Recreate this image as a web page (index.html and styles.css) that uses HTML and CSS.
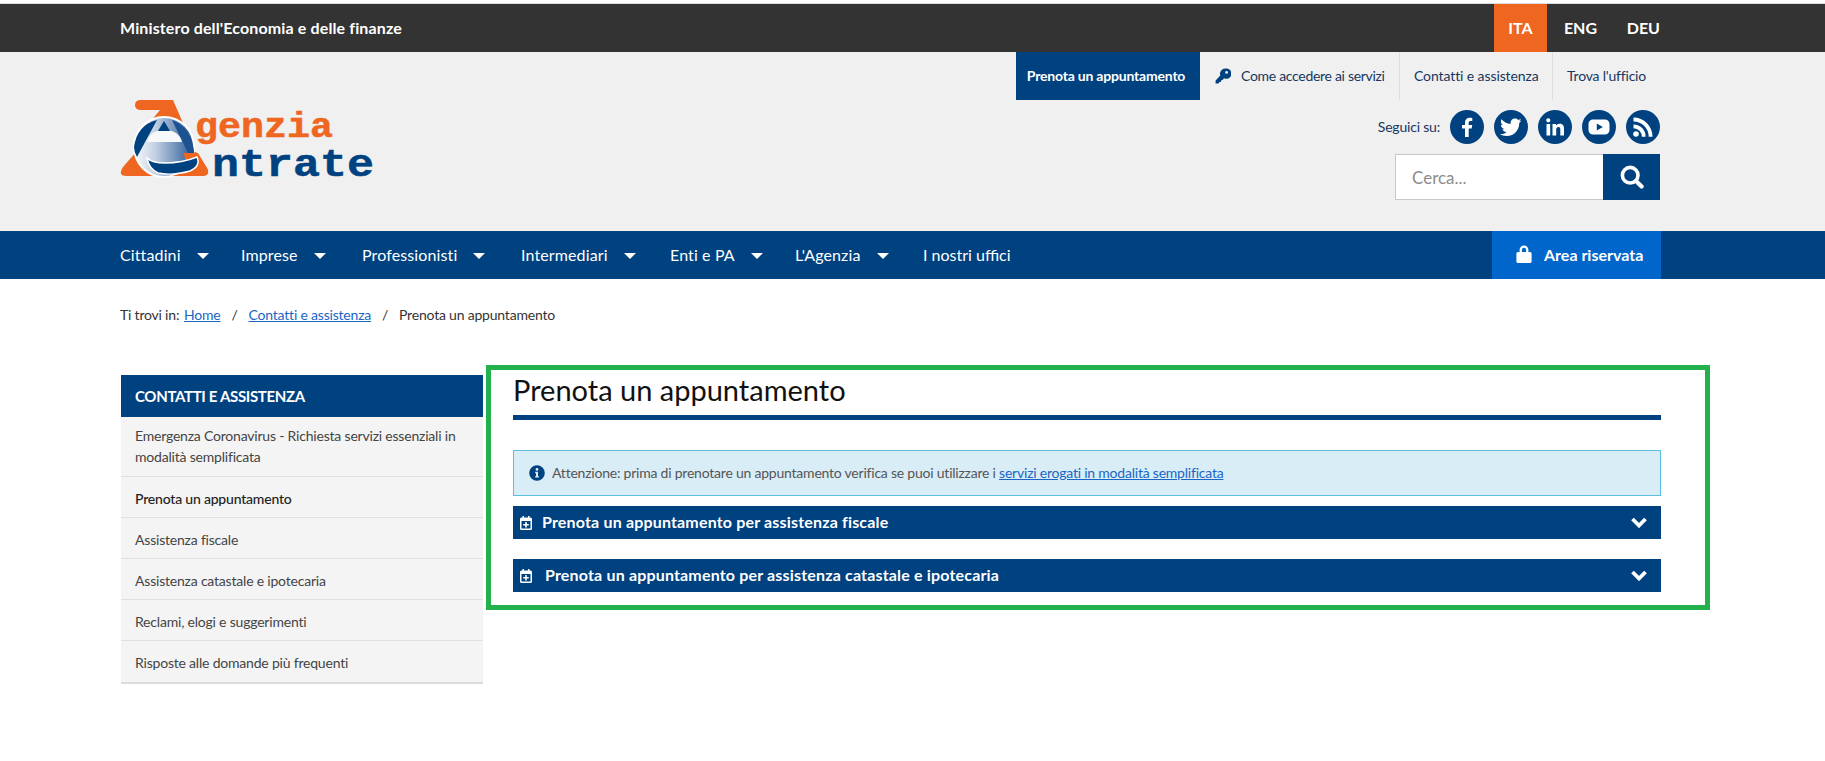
FILE: index.html
```html
<!DOCTYPE html>
<html lang="it">
<head>
<meta charset="utf-8">
<title>Prenota un appuntamento - Agenzia delle Entrate</title>
<link rel="stylesheet" href="styles.css">
</head>
<body>
<div class="topline"></div>
<div class="topbar">
  <div class="wrap topbar-in">
    <span class="ministry">Ministero dell'Economia e delle finanze</span>
    <div class="langs">
      <a class="lang lang-ita">ITA</a>
      <a class="lang lang-eng">ENG</a>
      <a class="lang lang-deu">DEU</a>
    </div>
  </div>
</div>
<header class="header">
  <div class="wrap header-in">
    <svg class="logo" viewBox="120 98 256 92" width="256" height="92" role="img" aria-label="Agenzia Entrate">
      <defs>
        <linearGradient id="eg" x1="0" x2="1" y1="0" y2="0">
          <stop offset="0" stop-color="#f6f8fc"/>
          <stop offset="0.35" stop-color="#c3d0e3"/>
          <stop offset="1" stop-color="#2c5d98"/>
        </linearGradient>
      </defs>
      <path fill="#ee6620" d="M141 100H173L193 146 150 122 160 110H141Q135 110 135 105T141 100Z"/>
      <path fill="#ee6620" d="M136 152 123 167Q117 176 127 176H201Q211 176 207 168L196 152Z"/>
      <circle cx="164" cy="147" r="31" fill="#fff"/>
      <circle cx="164" cy="147" r="29" fill="url(#eg)"/>
      <path fill="#00417f" d="M157 120Q137 125 134 147 134 152 137 157Z"/>
      <path fill="#1d5290" d="M172 120Q190 126 194 150L194 153H188Z"/>
      <path fill="#f7f8fa" d="M147 142Q150 130 164 130 179 130 182 142Z"/>
      <path fill="#00417f" d="M164 121 170 131H158Z"/>
      <path fill="#ee6620" d="M183 153H198L207 168Q211 176 201 176H172Q192 172 183 153Z"/>
      <path fill="#00417f" stroke="#fff" stroke-width="1.500" d="M147 158Q152 163 165 163 182 163 197 157 201 166 190 171 172 176 158 173 149 169 147 158Z"/>
      <text class="logo-t logo-g" x="195" y="137" textLength="138" lengthAdjust="spacingAndGlyphs">genzia</text>
      <text class="logo-t logo-n" x="212" y="176" textLength="162" lengthAdjust="spacingAndGlyphs">ntrate</text>
    </svg>
    <div class="header-right">
      <nav class="util">
        <a class="util-item util-on">Prenota un appuntamento</a>
        <a class="util-item util-key">
          <svg class="ico-key" viewBox="0 0 16 16" width="16" height="16"><path fill="#00417f" d="M10.2 0.5A5.2 5.2 0 0 0 5.300 7.400L0.600 12.600 0.600 15.400 3.600 15.400 4.400 14 5.900 14 6.200 12.300 7.600 12 9 10.300A5.200 5.200 0 1 0 10.200 0.500ZM11.600 3A1.400 1.400 0 1 1 11.600 5.800 1.400 1.400 0 0 1 11.600 3Z"/></svg>
          <span>Come accedere ai servizi</span>
        </a>
        <a class="util-item util-con">Contatti e assistenza</a>
        <a class="util-item util-tro">Trova l'ufficio</a>
      </nav>
      <div class="social">
        <span class="social-label">Seguici su:</span>
        <a class="soc"><svg viewBox="0 0 34 34"><path fill="#fff" d="M18.7 27V18.6H21.7L22.2 15H18.7V12.8C18.7 11.7 19.1 11 20.5 11H22.3V7.9C21.9 7.8 20.9 7.7 19.8 7.7 17 7.7 15 9.3 15 12.4V15H12V18.6H15V27Z"/></svg></a>
        <a class="soc"><svg viewBox="0 0 34 34"><path fill="#fff" d="M27.5 10.6C26.7 10.9 25.9 11.2 25 11.3 25.9 10.7 26.6 9.9 26.9 8.8 26.1 9.3 25.1 9.7 24.2 9.9 23.4 9 22.2 8.5 20.9 8.5 18.4 8.5 16.5 10.5 16.5 12.9 16.5 13.3 16.5 13.6 16.6 13.9 12.9 13.7 9.7 12 7.5 9.3 7.1 10 6.9 10.7 6.9 11.5 6.9 13 7.7 14.4 8.9 15.2 8.2 15.2 7.5 15 6.9 14.7V14.7C6.9 16.9 8.4 18.6 10.4 19 10 19.1 9.7 19.2 9.2 19.2 8.9 19.2 8.7 19.2 8.4 19.1 8.9 20.9 10.6 22.2 12.5 22.2 11 23.4 9 24.1 6.9 24.1 6.5 24.1 6.2 24.1 5.8 24 7.8 25.3 10.1 26 12.6 26 20.8 26 25.2 19.3 25.2 13.4V12.9C26.1 12.2 26.9 11.5 27.5 10.6Z"/></svg></a>
        <a class="soc"><svg viewBox="0 0 34 34"><path fill="#fff" d="M8.5 14H12.2V25.5H8.5ZM10.3 8.2A2.1 2.1 0 1 1 10.3 12.4 2.1 2.1 0 0 1 10.3 8.2ZM14.5 14H18V15.6C18.6 14.6 19.9 13.7 21.7 13.7 25.4 13.7 26 16.1 26 19.2V25.5H22.3V20C22.3 18.6 22.3 16.9 20.4 16.9 18.5 16.9 18.2 18.4 18.2 19.9V25.5H14.5Z"/></svg></a>
        <a class="soc"><svg viewBox="0 0 34 34"><path fill="#fff" fill-rule="evenodd" d="M11 9.5H23A4.5 4.5 0 0 1 27.5 14V20A4.5 4.5 0 0 1 23 24.5H11A4.5 4.5 0 0 1 6.5 20V14A4.5 4.5 0 0 1 11 9.5ZM14.8 13.5V20.5L20.8 17Z"/></svg></a>
        <a class="soc"><svg viewBox="0 0 34 34"><path fill="#fff" d="M10 21.2A2.8 2.8 0 1 1 10 26.8 2.8 2.8 0 0 1 10 21.2ZM7.5 14.4A12 12 0 0 1 19.6 26.8H15.8A8.3 8.3 0 0 0 7.5 18.2ZM7.5 7.6A19 19 0 0 1 26.5 26.8H22.7A15.3 15.3 0 0 0 7.5 11.4Z"/></svg></a>
      </div>
      <form class="search">
        <input class="search-input" type="text" placeholder="Cerca...">
        <button class="search-btn" type="button" aria-label="Cerca">
          <svg viewBox="0 0 24 24" width="24" height="24"><path fill="none" stroke="#fff" stroke-width="3.6" d="M10.2 2.4A7.8 7.8 0 1 0 10.2 18 7.8 7.8 0 0 0 10.2 2.4Z"/><path fill="none" stroke="#fff" stroke-width="4.2" stroke-linecap="round" d="M16 16 21.6 21.6"/></svg>
        </button>
      </form>
    </div>
  </div>
</header>
<nav class="mainnav">
  <div class="wrap mainnav-in">
    <a class="nav-item nav-c">Cittadini<i class="caret"></i></a>
    <a class="nav-item nav-i">Imprese<i class="caret"></i></a>
    <a class="nav-item nav-p">Professionisti<i class="caret"></i></a>
    <a class="nav-item nav-m">Intermediari<i class="caret"></i></a>
    <a class="nav-item nav-e">Enti e PA<i class="caret"></i></a>
    <a class="nav-item nav-l">L'Agenzia<i class="caret"></i></a>
    <a class="nav-item nav-u">I nostri uffici</a>
    <a class="area">
      <svg viewBox="0 0 16 18" width="16" height="18"><path fill="#fff" d="M3.6 7V4.800A4.400 4.400 0 0 1 12.400 4.800V7H14A1.600 1.600 0 0 1 15.600 8.600V16.400A1.600 1.600 0 0 1 14 18H2A1.600 1.600 0 0 1 .4 16.400V8.600A1.600 1.600 0 0 1 2 7ZM5.900 7H10.100V4.800A2.100 2.100 0 0 0 5.900 4.800Z"/></svg>
      <span>Area riservata</span>
    </a>
  </div>
</nav>
<div class="wrap">
  <p class="crumbs">
    <span class="cr-a">Ti trovi in:</span>
    <a class="cr-link cr-home">Home</a>
    <span class="cr-sep">/</span>
    <a class="cr-link">Contatti e assistenza</a>
    <span class="cr-sep">/</span>
    <span>Prenota un appuntamento</span>
  </p>
  <div class="columns">
    <aside class="side">
      <h2 class="side-h">CONTATTI E ASSISTENZA</h2>
      <ul class="side-list">
        <li class="side-item side-two">Emergenza Coronavirus - Richiesta servizi essenziali in modalità semplificata</li>
        <li class="side-item side-active">Prenota un appuntamento</li>
        <li class="side-item">Assistenza fiscale</li>
        <li class="side-item">Assistenza catastale e ipotecaria</li>
        <li class="side-item">Reclami, elogi e suggerimenti</li>
        <li class="side-item side-last">Risposte alle domande più frequenti</li>
      </ul>
    </aside>
    <main class="main">
      <h1 class="title">Prenota un appuntamento</h1>
      <div class="alert">
        <svg class="ico-info" viewBox="0 0 16 16" width="16" height="16"><path fill="#00417f" fill-rule="evenodd" d="M8 .2A7.800 7.800 0 1 1 8 15.800 7.800 7.800 0 0 1 8 .2ZM8 3A1.400 1.400 0 1 0 8 5.800 1.400 1.400 0 0 0 8 3ZM6.200 6.800V8.200H7V11H6.200V12.500H9.800V11H9V6.800Z"/></svg>
        <span class="alert-t">Attenzione: prima di prenotare un appuntamento verifica se puoi utilizzare i <a class="alert-l">servizi erogati in modalità semplificata</a></span>
      </div>
      <div class="acc">
        <svg class="ico-cal" viewBox="0 0 12 14" width="12" height="14"><path fill="#fff" fill-rule="evenodd" d="M2.500 0H4V1.500H8V0H9.500V1.500H10.500A1.500 1.500 0 0 1 12 3V12.500A1.500 1.500 0 0 1 10.500 14H1.500A1.500 1.500 0 0 1 0 12.500V3A1.500 1.500 0 0 1 1.500 1.500H2.500ZM1.500 5V12.500H10.500V5ZM5.200 6H6.800V8H8.800V9.500H6.800V11.500H5.200V9.500H3.200V8H5.200Z"/></svg>
        <span class="acc-t acc-t1">Prenota un appuntamento per assistenza fiscale</span>
        <svg class="ico-chev" viewBox="0 0 16 11" width="16" height="11"><path fill="none" stroke="#fff" stroke-width="3.800" d="M1.500 2 8 8.500 14.500 2"/></svg>
      </div>
      <div class="acc acc-2">
        <svg class="ico-cal" viewBox="0 0 12 14" width="12" height="14"><path fill="#fff" fill-rule="evenodd" d="M2.500 0H4V1.500H8V0H9.500V1.500H10.500A1.500 1.500 0 0 1 12 3V12.500A1.500 1.500 0 0 1 10.500 14H1.500A1.500 1.500 0 0 1 0 12.500V3A1.500 1.500 0 0 1 1.500 1.500H2.500ZM1.500 5V12.500H10.500V5ZM5.200 6H6.800V8H8.800V9.500H6.800V11.500H5.200V9.500H3.200V8H5.200Z"/></svg>
        <span class="acc-t acc-t2">Prenota un appuntamento per assistenza catastale e ipotecaria</span>
        <svg class="ico-chev" viewBox="0 0 16 11" width="16" height="11"><path fill="none" stroke="#fff" stroke-width="3.800" d="M1.500 2 8 8.500 14.500 2"/></svg>
      </div>
    </main>
  </div>
</div>
</body>
</html>
```
FILE: styles.css
```css
* { box-sizing: border-box; }
html, body { margin: 0; padding: 0; }
body { background: #fff; font-family: "Lato", "Liberation Sans", sans-serif; font-size: 14px; color: #333; overflow-x: hidden; }
a { color: inherit; text-decoration: none; }
.wrap { width: 1825px; padding: 0 165px 0 120px; }
.topline { height: 4px; background: #fff; border-bottom: 1px solid #ddd; }
.topbar { background: #333; height: 48px; color: #fff; }
.topbar-in { display: flex; justify-content: space-between; align-items: stretch; height: 48px; }
.ministry { align-self: center; font-size: 16px; font-weight: 700; letter-spacing: 0.13px; padding-bottom: 2px; }
.langs { display: flex; align-items: stretch; }
.lang { display: flex; align-items: center; justify-content: center; font-size: 16px; font-weight: 700; padding-bottom: 2px; }
.lang-ita { width: 53px; background: #ee6620; }
.lang-eng { width: 65px; padding-left: 2px; }
.lang-deu { width: 48px; justify-content: flex-end; }
.header { background: #f0f0f0; height: 179px; }
.header-in { display: flex; justify-content: space-between; }
.logo { display: block; margin-top: 46px; }
.header-right { display: flex; flex-direction: column; align-items: flex-end; }
.util { display: flex; height: 48px; font-size: 14px; color: #17375e; }
.util-item { display: flex; align-items: center; border-right: 1px solid #dedede; }
.util-item span, .util-con, .util-tro { padding-bottom: 2px; }
.util-on { width: 184px; justify-content: center; background: #00417f; color: #fff; font-weight: 700; border-right: 0; letter-spacing: -0.2px; padding: 0 4px 2px 0; }
.util-key { width: 200px; padding-left: 15px; gap: 10px; letter-spacing: -0.3px; }
.util-con { width: 153px; padding-left: 14px; letter-spacing: -0.1px; }
.util-tro { width: 107px; padding-left: 14px; border-right: 0; letter-spacing: -0.2px; }
.ico-key { flex: none; }
.social { display: flex; align-items: center; gap: 10px; margin-top: 10px; height: 34px; }
.social-label { font-size: 14px; color: #17375e; letter-spacing: -0.2px; padding-bottom: 2px; }
.soc { display: block; width: 34px; height: 34px; border-radius: 50%; background: #00417f; }
.soc svg { display: block; width: 34px; height: 34px; }
.search { display: flex; margin: 10px 0 0; height: 46px; }
.search-input { width: 208px; height: 46px; border: 1px solid #c8c8c8; border-right: 0; background: #fff; padding: 0 16px; font: 17px "Lato", sans-serif; outline: 0; }
.search-input::placeholder { color: #8c8c8c; opacity: 1; }
.search-btn { width: 57px; height: 46px; border: 0; padding: 0; background: #00417f; display: flex; align-items: center; justify-content: center; }
.mainnav { background: #00417f; height: 48px; color: #fff; }
.mainnav-in { display: flex; align-items: stretch; height: 48px; }
.nav-item { display: flex; align-items: center; font-size: 16px; letter-spacing: 0.12px; padding-bottom: 2px; }
.caret { display: block; width: 0; height: 0; border-left: 6px solid transparent; border-right: 6px solid transparent; border-top: 6px solid #fff; margin-left: 16px; margin-top: 3px; }
.nav-c { width: 121px; }
.nav-i { width: 121px; }
.nav-p { width: 159px; }
.nav-m { width: 149px; }
.nav-e { width: 125px; }
.nav-l { width: 128px; }
.nav-u { letter-spacing: 0; }
.area { margin-left: auto; margin-right: -1px; width: 169px; background: #0066cc; display: flex; align-items: center; padding: 0 0 2px 24px; gap: 12px; font-size: 16px; font-weight: 700; }
.crumbs { margin: 0; height: 86px; padding-top: 26px; font-size: 14px; line-height: 20px; color: #333; display: flex; letter-spacing: -0.2px; }
.cr-a { width: 64px; }
.cr-link { color: #1a66c4; text-decoration: underline; align-self: flex-start; }
.cr-sep { width: 28px; text-align: center; }
.columns { display: flex; align-items: flex-start; margin-right: -50px; }
.side { width: 362px; margin: 10px 3px 0 1px; flex: none; }
.side-h { margin: 0; height: 42px; padding-left: 14px; background: #00417f; color: #fff; font-size: 15px; line-height: 42px; font-weight: 700; letter-spacing: -0.33px; }
.side-list { list-style: none; margin: 0; padding: 0; background: #f4f4f4; }
.side-item { height: 41px; padding: 2px 14px 0; border-bottom: 1px solid #e0e0e0; line-height: 39px; color: #444; letter-spacing: -0.2px; }
.side-two { height: 60px; line-height: 21px; padding-top: 8px; }
.side-active { color: #222; font-weight: 500; }
.side-last { height: 43px; border-bottom: 2px solid #dcdcdc; }
.main { width: 1224px; height: 245px; flex: none; border: 5px solid #22b14c; padding: 0 44px 0 22px; }
.title { margin: 0; height: 50px; border-bottom: 5px solid #00417f; font-size: 29px; line-height: 40px; font-weight: 400; color: #111; }
.alert { margin-top: 30px; height: 46px; background: #d9edf7; border: 1px solid #5bc0de; display: flex; align-items: center; padding-left: 15px; gap: 7px; color: #555; }
.alert-t { letter-spacing: -0.22px; padding-bottom: 2px; }
.alert-l { color: #1a66c4; text-decoration: underline; }
.ico-info { flex: none; }
.acc { margin-top: 10px; height: 33px; background: #00417f; color: #fff; display: flex; align-items: center; padding: 0 14px 0 7px; }
.acc-2 { margin-top: 20px; }
.acc-t { font-size: 16px; font-weight: 700; margin-left: 10px; letter-spacing: 0.17px; padding-bottom: 2px; }
.acc-t2 { margin-left: 13px; }
.ico-chev { margin-left: auto; margin-top: 0; }
.logo-t { font-family: "Liberation Mono", monospace; font-weight: 700; }
.logo-g { font-size: 35px; fill: #ee6620; stroke: #ee6620; stroke-width: 0.5px; }
.logo-n { font-size: 39px; fill: #00417f; stroke: #00417f; stroke-width: 0.5px; }
```
